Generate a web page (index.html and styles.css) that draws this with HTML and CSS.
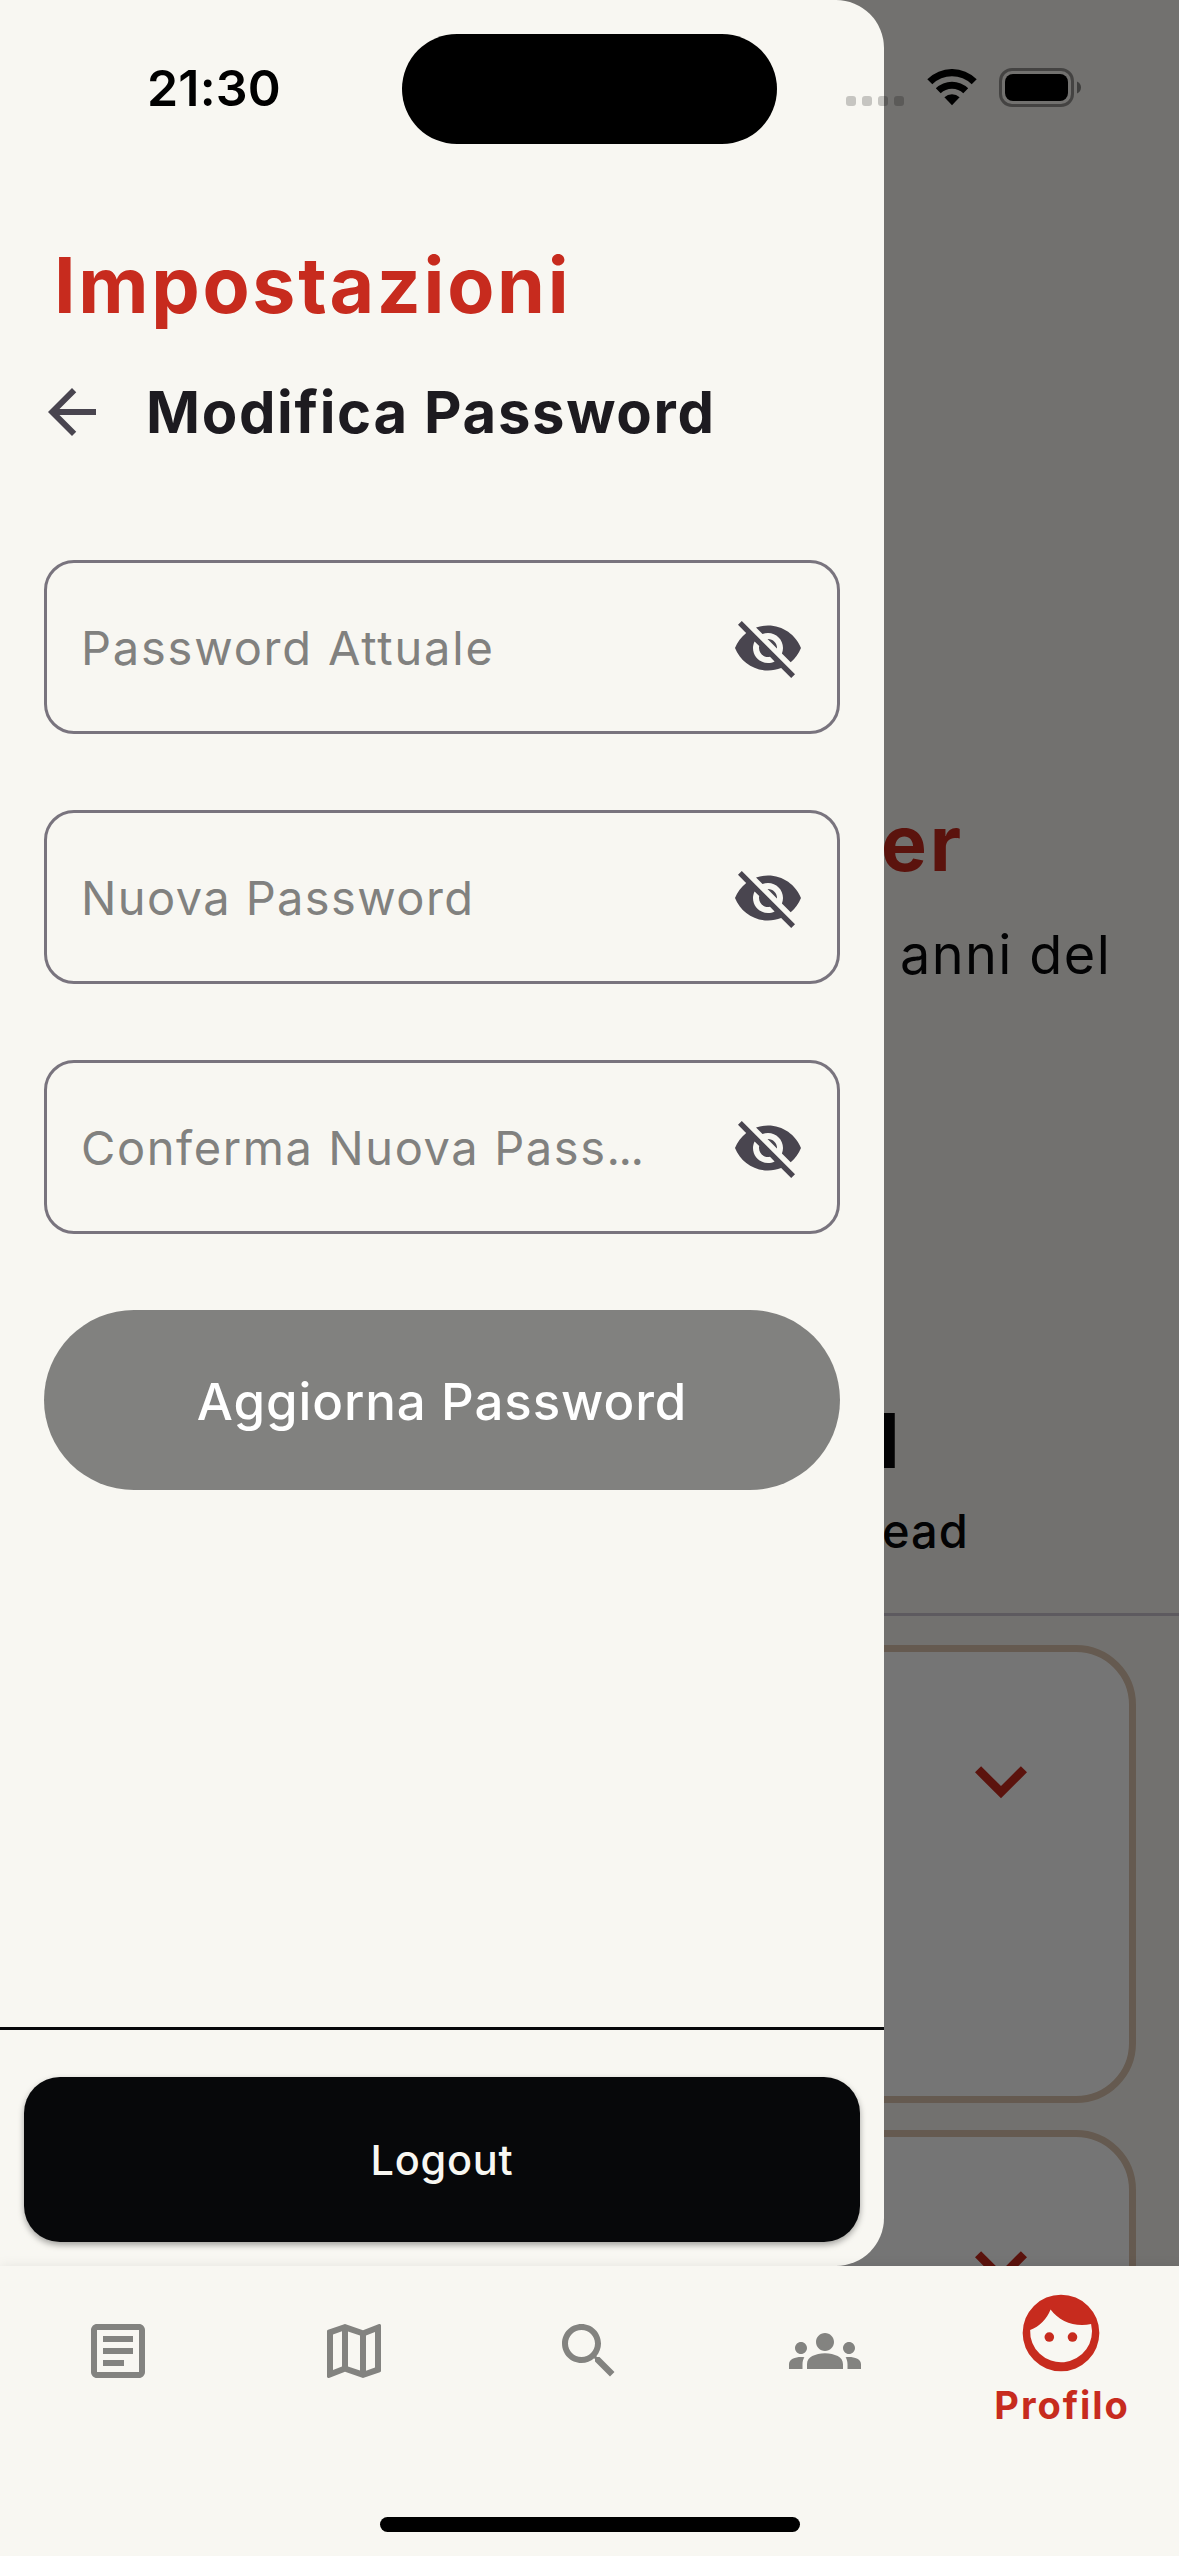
FILE: index.html
```
<!DOCTYPE html>
<html lang="it">
<head>
<meta charset="utf-8">
<title>Impostazioni</title>
<link rel="stylesheet" href="styles.css">
</head>
<body>
<svg class="defs" aria-hidden="true">
  <symbol id="eye-off" viewBox="0 0 24 24"><path d="M12 7c2.76 0 5 2.24 5 5 0 .65-.13 1.26-.36 1.83l2.92 2.92c1.51-1.26 2.7-2.89 3.43-4.75-1.73-4.39-6-7.5-11-7.5-1.4 0-2.74.25-3.98.7l2.16 2.16C10.74 7.13 11.35 7 12 7zM2 4.27l2.28 2.28.46.46C3.08 8.3 1.78 10.02 1 12c1.73 4.39 6 7.5 11 7.5 1.55 0 3.03-.3 4.38-.84l.42.42L19.73 22 21 20.73 3.27 3 2 4.27zM7.53 9.8l1.55 1.55c-.05.21-.08.43-.08.65 0 1.66 1.34 3 3 3 .22 0 .44-.03.65-.08l1.55 1.55c-.67.33-1.41.53-2.2.53-2.76 0-5-2.24-5-5 0-.79.2-1.53.53-2.2zm4.31-.78l3.15 3.15.02-.16c0-1.66-1.34-3-3-3l-.17.01z"/></symbol>
  <symbol id="chevron" viewBox="0 0 24 24"><path d="M16.59 8.59L12 13.17 7.41 8.59 6 10l6 6 6-6z"/></symbol>
</svg>
<div class="screen">
  <main class="profile">
    <h2 class="profile-name">er</h2>
    <p class="profile-bio">anni del</p>
    <p class="stat-value">1</p>
    <p class="stat-label">ead</p>
    <hr class="profile-rule">
    <div class="cards">
      <article class="card"><svg class="card-chevron"><use href="#chevron"/></svg></article>
      <article class="card"><svg class="card-chevron"><use href="#chevron"/></svg></article>
    </div>
  </main>
  <div class="scrim"></div>

  <aside class="drawer">
    <div class="drawer-body">
      <h1 class="drawer-title">Impostazioni</h1>
      <div class="subheader">
        <svg class="back" viewBox="0 0 24 24"><path d="M20 11H7.83l5.59-5.59L12 4l-8 8 8 8 1.41-1.41L7.83 13H20v-2z"/></svg>
        <h2 class="subtitle">Modifica Password</h2>
      </div>
      <form class="form">
        <div class="field"><span class="hint hint-current">Password Attuale</span><svg class="eye"><use href="#eye-off"/></svg></div>
        <div class="field"><span class="hint hint-new">Nuova Password</span><svg class="eye"><use href="#eye-off"/></svg></div>
        <div class="field"><span class="hint hint-confirm">Conferma Nuova Pass<span class="dots">...</span></span><svg class="eye"><use href="#eye-off"/></svg></div>
        <button class="submit" type="button">Aggiorna Password</button>
      </form>
    </div>
    <footer class="drawer-footer">
      <button class="logout" type="button">Logout</button>
    </footer>
  </aside>

  <nav class="tabs">
    <a class="tab"><svg class="tab-icon" viewBox="0 0 24 24"><path fill-rule="evenodd" d="M5 3h14c1.1 0 2 .9 2 2v14c0 1.1-.9 2-2 2H5c-1.1 0-2-.9-2-2V5c0-1.1.9-2 2-2zm0 2v14h14V5zM7 7h10v2H7zM7 11h10v2H7zM7 15h7v2H7z"/></svg></a>
    <a class="tab"><svg class="tab-icon" viewBox="0 0 24 24"><path d="M20.5 3l-.16.03L15 5.1 9 3 3.36 4.9c-.21.07-.36.25-.36.48V20.5c0 .28.22.5.5.5l.16-.03L9 18.9l6 2.1 5.64-1.9c.21-.07.36-.25.36-.48V3.5c0-.28-.22-.5-.5-.5zM10 5.47l4 1.4v11.66l-4-1.4V5.47zm-5 .99l3-1.01v11.7l-3 1.16V6.46zm14 11.08l-3 1.01V6.86l3-1.16v11.84z"/></svg></a>
    <a class="tab"><svg class="tab-icon" viewBox="0 0 24 24"><path d="M15.5 14h-.79l-.28-.27C15.41 12.59 16 11.11 16 9.5 16 5.91 13.09 3 9.5 3S3 5.91 3 9.5 5.91 16 9.5 16c1.61 0 3.09-.59 4.23-1.57l.27.28v.79l5 4.99L20.49 19l-4.99-5zm-6 0C7.01 14 5 11.99 5 9.5S7.01 5 9.5 5 14 7.01 14 9.5 11.99 14 9.5 14z"/></svg></a>
    <a class="tab"><svg class="tab-icon" viewBox="0 0 24 24"><path d="M12 12.75c1.63 0 3.07.39 4.24.9 1.08.48 1.76 1.56 1.76 2.73V18H6v-1.61c0-1.18.68-2.26 1.76-2.73 1.17-.52 2.61-.91 4.24-.91zM4 13c1.1 0 2-.9 2-2s-.9-2-2-2-2 .9-2 2 .9 2 2 2zm1.13 1.1c-.37-.06-.74-.1-1.13-.1-.99 0-1.93.21-2.78.58C.48 14.9 0 15.62 0 16.43V18h4.5v-1.61c0-.83.23-1.61.63-2.29zM20 13c1.1 0 2-.9 2-2s-.9-2-2-2-2 .9-2 2 .9 2 2 2zm4 3.43c0-.81-.48-1.53-1.22-1.85-.85-.37-1.79-.58-2.78-.58-.39 0-.76.04-1.13.1.4.68.63 1.46.63 2.29V18H24v-1.57zM12 6c1.66 0 3 1.34 3 3s-1.34 3-3 3-3-1.34-3-3 1.34-3 3-3z"/></svg></a>
    <a class="tab tab-active">
      <svg class="face" viewBox="0 0 24 24"><path fill-rule="evenodd" d="M12 2a10 10 0 1 1 0 20 10 10 0 0 1 0-20zM3.95 11.2A8.07 8.07 0 1 0 19.85 9.65C19.1 9.82 18.3 9.9 17.5 9.9 14.1 9.9 11.2 8.45 9.28 5.86 8.3 8.35 6.4 10.3 3.95 11.2z"/><circle cx="8.95" cy="13.05" r="1.25"/><circle cx="15" cy="13.05" r="1.25"/></svg>
      <span class="tab-label">Profilo</span>
    </a>
  </nav>
  <div class="home-indicator"></div>

  <header class="status">
    <span class="clock">21:30</span>
    <span class="island"></span>
    <span class="signal"><i></i><i></i><i></i><i></i></span>
    <svg class="wifi" viewBox="0 0 50 38">
      <path d="M0.3 10.2A35 35 0 0 1 49.7 10.2L44.7 15.3A28.2 28.2 0 0 0 5.3 15.3z"/>
      <path d="M8.8 19.3A23.2 23.2 0 0 1 41.2 19.3L36.3 24.3A16.2 16.2 0 0 0 13.7 24.3z"/>
      <path d="M17.4 28.2A11.4 11.4 0 0 1 32.6 28.2L25 36.3z"/>
    </svg>
    <svg class="battery" viewBox="0 0 83 39">
      <rect x="1.5" y="1.5" width="72" height="36" rx="11.5" fill="none" stroke="#000" stroke-opacity=".4" stroke-width="3"/>
      <rect x="6" y="6" width="63" height="27" rx="8"/>
      <path d="M78 13.5c2.400 1 4 3.200 4 6s-1.600 5-4 6z" fill-opacity=".45"/>
    </svg>
  </header>
</div>
</body>
</html>
```
FILE: styles.css
```
* { box-sizing: border-box; margin: 0; padding: 0; }

body {
  font-family: Inter, "Liberation Sans", sans-serif;
  background: #f8f7f2;
}

.defs { position: absolute; width: 0; height: 0; }
svg { display: block; flex: none; }
button { border: 0; font-family: inherit; }

.screen {
  position: relative;
  width: 1179px;
  height: 2556px;
  overflow: hidden;
  background: #f8f7f2;
}

/* Page behind the drawer */
.profile {
  height: 2266px;
  padding-top: 803px;
  overflow: hidden;
  color: #07080a;
}
.profile-name {
  margin-left: 881px;
  font-size: 77px;
  font-weight: 700;
  line-height: 80px;
  letter-spacing: 3px;
  color: #c72b1e;
}
.profile-bio {
  margin: 42px 0 0 900px;
  font-size: 54px;
  line-height: 60px;
  letter-spacing: 1.39px;
}
.stat-value {
  margin: 415px 0 0 867px;
  font-size: 76px;
  font-weight: 700;
  line-height: 80px;
}
.stat-label {
  margin: 21px 0 0 882px;
  font-size: 47px;
  font-weight: 500;
  line-height: 60px;
  letter-spacing: 1px;
}
.profile-rule {
  margin-top: 52px;
  height: 3px;
  border: 0;
  background: #cac4d0;
}
.cards {
  display: flex;
  flex-direction: column;
  gap: 27px;
  padding: 29px 43px 0;
}
.card {
  display: flex;
  justify-content: flex-end;
  flex: none;
  height: 458px;
  padding: 77px 76px 0 0;
  border: 7px solid #dcc4ae;
  border-radius: 60px;
  background: #fff;
}
.card-chevron { width: 104px; height: 104px; fill: #c72b1e; }

.scrim {
  position: absolute;
  inset: 0 0 290px;
  background: rgba(0, 0, 0, .54);
}

/* Settings drawer */
.drawer {
  position: absolute;
  top: 0;
  left: 0;
  width: 884px;
  height: 2266px;
  display: flex;
  flex-direction: column;
  border-radius: 0 48px 48px 0;
  background: #f8f7f2;
  overflow: hidden;
}
.drawer-body { flex: 1; padding: 245px 44px 0; }
.drawer-title {
  margin-left: 10px;
  font-size: 77px;
  font-weight: 700;
  line-height: 81px;
  letter-spacing: 2.68px;
  color: #c72b1e;
}
.subheader {
  display: flex;
  align-items: center;
  gap: 38px;
  height: 72px;
  margin: 50px 0 0 -8px;
}
.back { width: 72px; height: 72px; fill: #49454f; }
.subtitle {
  font-size: 58px;
  font-weight: 700;
  line-height: 72px;
  letter-spacing: 1.65px;
  color: #1d1b20;
}
.form {
  display: flex;
  flex-direction: column;
  gap: 76px;
  margin-top: 112px;
}
.field {
  display: flex;
  align-items: center;
  justify-content: space-between;
  height: 174px;
  padding: 1px 33px 0 34px;
  border: 3px solid #79747e;
  border-radius: 30px;
}
.hint {
  font-size: 47px;
  line-height: 60px;
  color: #81817f;
  white-space: nowrap;
}
.hint-current { letter-spacing: 1.8px; }
.hint-new { letter-spacing: 1.4px; }
.hint-confirm { letter-spacing: 1.6px; }
.dots { letter-spacing: -1.6px; }
.eye { width: 72px; height: 72px; fill: #49454f; }
.submit {
  height: 180px;
  padding-top: 3px;
  border-radius: 90px;
  background: #81817f;
  color: #fff;
  font-size: 51px;
  font-weight: 500;
  letter-spacing: .9px;
}
.drawer-footer {
  height: 239px;
  padding: 47px 24px 0;
  border-top: 3px solid #07080a;
}
.logout {
  display: block;
  width: 100%;
  height: 165px;
  border-radius: 36px;
  background: #07080a;
  box-shadow: 0 3px 6px rgba(0, 0, 0, .35);
  color: #f8f7f2;
  font-size: 41.5px;
  font-weight: 500;
  letter-spacing: .74px;
}

/* Bottom navigation */
.tabs {
  position: relative;
  display: grid;
  grid-template-columns: repeat(5, 1fr);
  height: 290px;
  background: #f8f7f2;
  box-shadow: 0 0 12px rgba(0, 0, 0, .08);
}
.tab {
  display: flex;
  flex-direction: column;
  align-items: center;
  padding-top: 49px;
  fill: #838380;
}
.tab-icon { width: 72px; height: 72px; }
.tab-active { padding-top: 21px; fill: #c72b1e; }
.face { width: 92px; height: 92px; }
.tab-label {
  margin: 2px 0 0 2px;
  font-size: 38px;
  font-weight: 700;
  line-height: 48px;
  letter-spacing: 1.95px;
  color: #c72b1e;
}
.home-indicator {
  position: absolute;
  left: 380px;
  bottom: 24px;
  width: 420px;
  height: 15px;
  border-radius: 8px;
  background: #000;
}

/* System status bar */
.status {
  position: absolute;
  top: 0;
  left: 0;
  width: 1179px;
  height: 177px;
  display: flex;
  align-items: center;
  padding-left: 147px;
}
.clock {
  width: 255px;
  padding-bottom: 2px;
  font-size: 50px;
  font-weight: 600;
  line-height: 60px;
  letter-spacing: .2px;
}
.island {
  width: 375px;
  height: 110px;
  border-radius: 55px;
  background: #000;
}
.signal {
  display: flex;
  gap: 6px;
  margin: 24px 0 0 69px;
}
.signal i {
  width: 10px;
  height: 10px;
  border-radius: 3px;
  background: rgba(0, 0, 0, .2);
}
.wifi { width: 50px; height: 38px; margin: 0 0 2px 23px; }
.battery { width: 83px; height: 39px; margin: 0 0 2px 22px; }
```
